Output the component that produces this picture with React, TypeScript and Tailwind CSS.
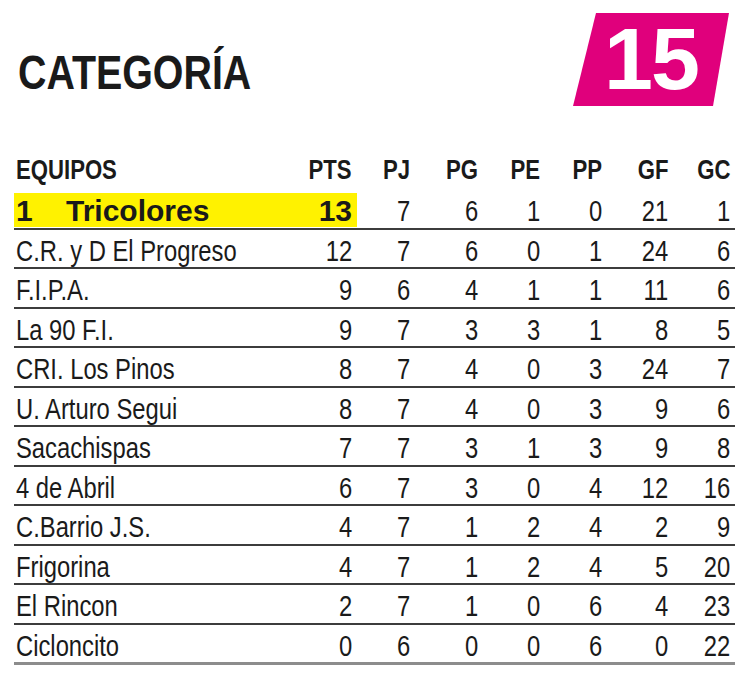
const rows: [string, number, number, number, number, number, number, number][] = [
  ['C.R. y D El Progreso', 12, 7, 6, 0, 1, 24, 6],
  ['F.I.P.A.', 9, 6, 4, 1, 1, 11, 6],
  ['La 90 F.I.', 9, 7, 3, 3, 1, 8, 5],
  ['CRI. Los Pinos', 8, 7, 4, 0, 3, 24, 7],
  ['U. Arturo Segui', 8, 7, 4, 0, 3, 9, 6],
  ['Sacachispas', 7, 7, 3, 1, 3, 9, 8],
  ['4 de Abril', 6, 7, 3, 0, 4, 12, 16],
  ['C.Barrio J.S.', 4, 7, 1, 2, 4, 2, 9],
  ['Frigorina', 4, 7, 1, 2, 4, 5, 20],
  ['El Rincon', 2, 7, 1, 0, 6, 4, 23],
  ['Cicloncito', 0, 6, 0, 0, 6, 0, 22],
];

const cols = ['PJ', 'PG', 'PE', 'PP', 'GF', 'GC'];
const grid = 'grid grid-cols-[280px_63px_58px_68px_62px_62px_66px_62px]';

// no condensed face installed, so squeeze Liberation Sans
function L({ children }: { children: React.ReactNode }) {
  return <span className="inline-block whitespace-nowrap origin-left scale-x-[0.82]">{children}</span>;
}
function R({ children }: { children: React.ReactNode }) {
  return (
    <span className="text-right pr-[5px]">
      <span className="inline-block whitespace-nowrap origin-right scale-x-[0.82]">{children}</span>
    </span>
  );
}

export default function App() {
  return (
    <div className="w-[750px] h-[680px] bg-white text-[#1a1a1a] font-['Liberation_Sans',Arial,sans-serif]">
      <div className="flex justify-between items-start pl-[18px] pr-[21px] pt-[13px]">
        <h1 className="mt-[36px] text-[48px] font-bold leading-none">
          <L>CATEGORÍA</L>
        </h1>
        <div className="w-[156px] h-[93px] bg-[#e0007c] [clip-path:polygon(23px_0,156px_0,140px_93px,0_93px)] flex justify-center pt-[2px]">
          <span className="font-bold text-[88px] leading-none text-white tracking-[-2px]">15</span>
        </div>
      </div>

      <div className="ml-[14px] w-[721px] mt-[44px] text-[29px]">
        {/* header */}
        <div className={`${grid} h-[40px] items-center font-bold text-[27px]`}>
          <span className="pl-[2px]"><L>EQUIPOS</L></span>
          <R>PTS</R>
          {cols.map(c => <R key={c}>{c}</R>)}
        </div>

        {/* leader */}
        <div className={`${grid} h-[39.55px] border-b-2 border-[#3c3c3c]`}>
          <div className="col-span-2 mt-[3px] h-[34px] bg-[#fff200] flex items-center justify-between font-bold text-[30px]">
            <span className="pl-[2px] flex">
              <span className="w-[50px]">1</span>
              <span>Tricolores</span>
            </span>
            <span className="pr-[5px]">13</span>
          </div>
          {[7, 6, 1, 0, 21, 1].map((v, i) => (
            <span key={i} className="self-center text-right"><R>{v}</R></span>
          ))}
        </div>

        {rows.map((r, idx) => (
          <div
            key={r[0]}
            className={`${grid} h-[39.55px] items-center ${idx === rows.length - 1 ? 'border-b-[3px] border-[#8c8c8c]' : 'border-b-2 border-[#3c3c3c]'}`}
          >
            <span className="pl-[2px]"><L>{r[0]}</L></span>
            {r.slice(1).map((v, i) => (
              <R key={i}>{v}</R>
            ))}
          </div>
        ))}
      </div>
    </div>
  );
}
